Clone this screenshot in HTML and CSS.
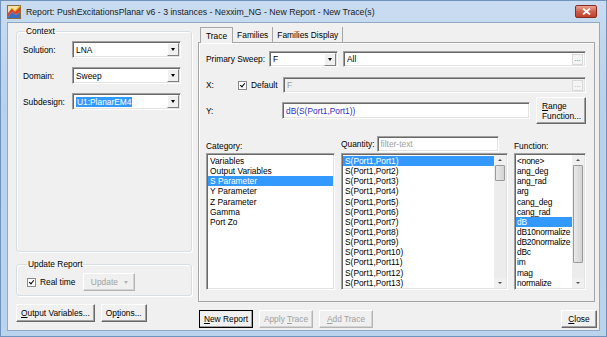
FILE: index.html
```html
<!DOCTYPE html>
<html lang="en">
<head>
    <meta charset="UTF-8">
    <title>Report - New Trace(s)</title>
    <link rel="stylesheet" href="styles.css">
</head>
<body>
    <div class="window">
        <!-- title bar -->
        <div class="titlebar">
            <svg class="app-icon" width="14" height="14" viewBox="0 0 14 14">
                <rect x="0.5" y="0.5" width="13" height="13" fill="#f4e2b0" stroke="#8a6d3b"/>
                <path d="M1 8 L5 3 L8 6 L13 1 L13 7 L9 10 L5 7 L1 12 Z" fill="#d8452b"/>
                <path d="M1 12 L5 7 L9 10 L13 7 L13 13 L1 13 Z" fill="#3b6fc4"/>
                <path d="M5 3 L8 6 L13 1" fill="none" stroke="#f2c230" stroke-width="1.2"/>
            </svg>
            <span class="title">Report: PushExcitationsPlanar v6 - 3 instances - Nexxim_NG - New Report - New Trace(s)</span>
            <div class="close-btn">
                <svg width="9" height="7" viewBox="0 0 9 7"><path d="M1 0.5 L8 6.5 M8 0.5 L1 6.5" stroke="#fff" stroke-width="1.8"/></svg>
            </div>
        </div>

        <div class="client">
            <!-- left column -->
            <div class="left-col">
                <fieldset class="group context-group">
                    <legend>Context</legend>
                    <div class="ctx-row">
                        <span class="ctx-label">Solution:</span>
                        <div class="combo ctx-combo"><span class="combo-text">LNA</span><span class="combo-arrow"></span></div>
                    </div>
                    <div class="ctx-row">
                        <span class="ctx-label">Domain:</span>
                        <div class="combo ctx-combo"><span class="combo-text">Sweep</span><span class="combo-arrow"></span></div>
                    </div>
                    <div class="ctx-row">
                        <span class="ctx-label">Subdesign:</span>
                        <div class="combo ctx-combo"><span class="combo-text"><span class="sel-text">U1:PlanarEM4</span></span><span class="combo-arrow"></span></div>
                    </div>
                </fieldset>

                <fieldset class="group update-group">
                    <legend>Update Report</legend>
                    <div class="update-row">
                        <span class="check checked"></span>
                        <span class="check-label">Real time</span>
                        <div class="btn disabled update-btn"><span>Update</span><span class="small-arrow"></span></div>
                    </div>
                </fieldset>

                <div class="btn-row">
                    <div class="btn"><span><u>O</u>utput Variables...</span></div>
                    <div class="btn"><span>Op<u>t</u>ions...</span></div>
                </div>
            </div>

            <!-- right column -->
            <div class="right-col">
                <div class="tabs">
                    <div class="tab active">Trace</div>
                    <div class="tab">Families</div>
                    <div class="tab">Families Display</div>
                </div>
                <div class="panel">
                    <div class="row sweep-row">
                        <span class="lbl sweep-lbl">Primary Sweep:</span>
                        <div class="combo sweep-combo"><span class="combo-text">F</span><span class="combo-arrow"></span></div>
                        <div class="field wide-field"><span class="field-text">All</span><span class="dots">...</span></div>
                    </div>
                    <div class="row x-row">
                        <span class="lbl x-lbl">X:</span>
                        <span class="check checked"></span>
                        <span class="check-label default-lbl">Default</span>
                        <div class="field wide-field disabled"><span class="field-text">F</span><span class="dots">...</span></div>
                    </div>
                    <div class="row y-row">
                        <span class="lbl y-lbl">Y:</span>
                        <div class="field y-field"><span class="field-text expr">dB(S(Port1,Port1))</span></div>
                        <div class="btn range-btn"><u>R</u>ange<br>Function...</div>
                    </div>

                    <div class="lists">
                        <div class="list-head">Category:</div>
                        <div class="list-head qty-head">Quantity: <div class="field filter"><span class="field-text hint">filter-text</span></div></div>
                        <div class="list-head">Function:</div>

                        <div class="listbox">
                            <div class="items">
                                <div class="item">Variables</div>
                                <div class="item">Output Variables</div>
                                <div class="item selected">S Parameter</div>
                                <div class="item">Y Parameter</div>
                                <div class="item">Z Parameter</div>
                                <div class="item">Gamma</div>
                                <div class="item">Port Zo</div>
                            </div>
                        </div>

                        <div class="listbox">
                            <div class="items">
                                <div class="item selected">S(Port1,Port1)</div>
                                <div class="item">S(Port1,Port2)</div>
                                <div class="item">S(Port1,Port3)</div>
                                <div class="item">S(Port1,Port4)</div>
                                <div class="item">S(Port1,Port5)</div>
                                <div class="item">S(Port1,Port6)</div>
                                <div class="item">S(Port1,Port7)</div>
                                <div class="item">S(Port1,Port8)</div>
                                <div class="item">S(Port1,Port9)</div>
                                <div class="item">S(Port1,Port10)</div>
                                <div class="item">S(Port1,Port11)</div>
                                <div class="item">S(Port1,Port12)</div>
                                <div class="item">S(Port1,Port13)</div>
                            </div>
                            <div class="scrollbar">
                                <span class="sb-btn up"></span>
                                <div class="sb-track"><span class="sb-thumb qty-thumb"></span></div>
                                <span class="sb-btn down"></span>
                            </div>
                        </div>

                        <div class="listbox fn-list">
                            <div class="items">
                                <div class="item">&lt;none&gt;</div>
                                <div class="item">ang_deg</div>
                                <div class="item">ang_rad</div>
                                <div class="item">arg</div>
                                <div class="item">cang_deg</div>
                                <div class="item">cang_rad</div>
                                <div class="item selected">dB</div>
                                <div class="item">dB10normalize</div>
                                <div class="item">dB20normalize</div>
                                <div class="item">dBc</div>
                                <div class="item">im</div>
                                <div class="item">mag</div>
                                <div class="item">normalize</div>
                            </div>
                            <div class="scrollbar">
                                <span class="sb-btn up"></span>
                                <div class="sb-track"><span class="sb-thumb fn-thumb"></span></div>
                                <span class="sb-btn down"></span>
                            </div>
                        </div>
                    </div>
                </div>

                <div class="btn-row">
                    <div class="btn default-btn"><span><u>N</u>ew Report</span></div>
                    <div class="btn disabled"><span>Apply <u>T</u>race</span></div>
                    <div class="btn disabled"><span><u>A</u>dd Trace</span></div>
                    <div class="btn close-dlg"><span><u>C</u>lose</span></div>
                </div>
            </div>
        </div>
    </div>
</body>
</html>
```

FILE: styles.css
```css
body {
    margin: 0;
    font-family: "Liberation Sans", Arial, sans-serif;
    font-size: 8.4px;
    color: #000;
    background: #fff;
}

/* window frame */
.window {
    width: 607px;
    height: 337px;
    box-sizing: border-box;
    display: flex;
    flex-direction: column;
    padding: 0 6px 5px 6px;
    border: 1px solid #6f93bd;
    background: linear-gradient(#c9dcf1, #b9d1eb 30%, #bcd3ec);
}

.titlebar {
    height: 21px;
    display: flex;
    align-items: center;
    flex-shrink: 0;
}

.app-icon {
    margin: 0 5px 0 0;
}

.title {
    flex: 1;
    font-size: 8.7px;
    color: #1a1a1a;
    white-space: nowrap;
}

.close-btn {
    width: 20px;
    height: 11px;
    margin-right: 3px;
    border: 1px solid #8b2a20;
    border-radius: 2px;
    background: linear-gradient(#e8a394, #d0604c 50%, #c0402c);
    display: flex;
    justify-content: center;
    align-items: center;
}

/* dialog body */
.client {
    flex: 1;
    display: flex;
    gap: 6px;
    background: #f0f0f0;
    border: 1px solid #8fa9c7;
    padding: 3px 5px 8px 8px;
    min-height: 0;
}

.left-col {
    width: 176px;
    display: flex;
    flex-direction: column;
}

.right-col {
    flex: 1;
    display: flex;
    flex-direction: column;
}

/* group boxes */
.group {
    margin: 0;
    border: 1px solid #d5dfe5;
    border-radius: 3px;
    box-shadow: inset 1px 1px #fff, 1px 1px #fff;
    padding: 0 6px;
}

.group legend {
    padding: 0 1px;
    margin-left: 2px;
    line-height: 10px;
}

.context-group {
    flex: 1;
    padding-top: 5px;
}

.update-group {
    margin-top: 7px;
    padding: 4px 8px 4px 8px;
}

.ctx-row {
    display: flex;
    align-items: center;
    height: 17px;
    margin-bottom: 9px;
}

.ctx-label {
    width: 49px;
}

.ctx-combo {
    width: 109px;
}

/* combo boxes and text fields */
.combo,
.field {
    height: 17px;
    box-sizing: border-box;
    background: #fff;
    border: 1px solid;
    border-color: #a0a0a0 #fff #fff #a0a0a0;
    box-shadow: inset 1px 1px #696969, inset -1px -1px #e3e3e3;
    display: flex;
    align-items: center;
}

.combo-text,
.field-text {
    flex: 1;
    padding-left: 3px;
    white-space: nowrap;
    overflow: hidden;
}

.sel-text {
    background: #3399ff;
    color: #fff;
    padding: 1px 1px;
}

.combo-arrow {
    width: 12px;
    height: 13px;
    margin-right: 1px;
    box-sizing: border-box;
    background: #f0f0f0;
    border: 1px solid;
    border-color: #fff #808080 #808080 #fff;
    position: relative;
}

.combo-arrow::after {
    content: "";
    position: absolute;
    left: 3px;
    top: 4px;
    border-left: 2.5px solid transparent;
    border-right: 2.5px solid transparent;
    border-top: 3px solid #000;
}

.dots {
    width: 11px;
    height: 11px;
    margin-right: 2px;
    box-sizing: border-box;
    border: 1px solid #d9d9d9;
    background: #f4f4f4;
    color: #2b56c9;
    font-size: 7px;
    line-height: 8px;
    text-align: center;
}

.field.disabled {
    background: #f0f0f0;
    color: #9a9a9a;
}

.field.disabled .dots {
    color: #a0a0a0;
}

/* checkbox */
.check {
    width: 9px;
    height: 9px;
    box-sizing: border-box;
    background: #fff;
    border: 1px solid #8a8a8a;
    position: relative;
    flex-shrink: 0;
}

.check.checked::after {
    content: "";
    position: absolute;
    left: 2px;
    top: 0px;
    width: 2px;
    height: 4px;
    border: solid #000;
    border-width: 0 1.5px 1.5px 0;
    transform: rotate(40deg);
}

.check-label {
    margin-left: 4px;
}

.update-row {
    display: flex;
    align-items: center;
    height: 18px;
    padding-left: 2px;
}

.update-btn {
    margin-left: 8px;
    width: 52px;
}

.small-arrow {
    display: inline-block;
    margin-left: 6px;
    border-left: 2.5px solid transparent;
    border-right: 2.5px solid transparent;
    border-top: 3px solid #b0b0b0;
}

/* buttons */
.btn {
    height: 18px;
    box-sizing: border-box;
    padding: 0 4px;
    display: flex;
    align-items: center;
    justify-content: center;
    background: #f0f0f0;
    border: 1px solid;
    border-color: #fff #696969 #696969 #fff;
    box-shadow: inset -1px -1px #a0a0a0;
    white-space: nowrap;
}

.btn.disabled {
    color: #a0a0a0;
    border-color: #fff #b4b4b4 #b4b4b4 #fff;
    box-shadow: inset -1px -1px #d4d4d4;
}

.btn-row {
    display: flex;
    gap: 6px;
    margin-top: 8px;
    flex-shrink: 0;
}

.default-btn {
    outline: 1px solid #000;
    outline-offset: -1px;
    width: 54px;
    margin-left: 1px;
}

.btn-row .btn.disabled {
    width: 54px;
}

.close-dlg {
    margin-left: auto;
    width: 36px;
    margin-right: -3px;
}

/* tabs */
.tabs {
    display: flex;
    height: 16px;
    padding-left: 2px;
    flex-shrink: 0;
}

.tab {
    padding: 0 4px;
    display: flex;
    align-items: center;
    border-right: 1px solid #a6a6a6;
    margin-top: 1px;
}

.tab.active {
    margin-top: 0;
    padding: 0 5px;
    border: 1px solid #a6a6a6;
    border-bottom: none;
    background: #f0f0f0;
    position: relative;
    top: 1px;
}

.panel {
    flex: 1;
    border: 1px solid #a6a6a6;
    box-shadow: inset 1px 1px #fff;
    padding: 8px 8px 11px 7px;
    display: flex;
    flex-direction: column;
    margin-right: -1px;
}

.row {
    display: flex;
    align-items: center;
}

.sweep-row {
    height: 16px;
}

.sweep-lbl {
    width: 63px;
}

.sweep-combo {
    width: 69px;
    height: 16px;
}

.sweep-row .wide-field {
    margin-left: 5px;
}

.wide-field {
    flex: 1;
    height: 16px;
}

.x-row {
    height: 16px;
    margin-top: 10px;
}

.x-lbl {
    width: 32px;
}

.default-lbl {
    width: 32px;
}

.y-row {
    height: 27px;
    margin-top: 4px;
}

.y-lbl {
    width: 76px;
}

.y-field {
    flex: 1;
    height: 17px;
}

.expr {
    color: #3030c0;
}

.range-btn {
    width: 50px;
    height: 27px;
    margin-left: 6px;
    padding-left: 5px;
    line-height: 10px;
    display: block;
    padding-top: 3px;
}

/* lists */
.lists {
    flex: 1;
    margin-top: 12px;
    display: grid;
    grid-template-columns: 129px 167px 72px;
    grid-template-rows: 16px 1fr;
    justify-content: space-between;
    row-gap: 1px;
    min-height: 0;
}

.list-head {
    display: flex;
    align-items: flex-end;
    padding-bottom: 1px;
}

.qty-head {
    align-items: center;
}

.filter {
    margin-left: 2px;
    width: 122px;
    height: 16px;
}

.hint {
    color: #a0a0a0;
}

.listbox {
    background: #fff;
    border: 1px solid;
    border-color: #a0a0a0 #fff #fff #a0a0a0;
    box-shadow: inset 1px 1px #696969, inset -1px -1px #e3e3e3;
    display: flex;
    padding: 1px;
    min-height: 0;
    overflow: hidden;
}

.items {
    flex: 1;
    padding-top: 1px;
    overflow: hidden;
}

.item {
    height: 10.15px;
    line-height: 10px;
    padding-left: 2px;
    white-space: nowrap;
}

.fn-list .item {
    padding-left: 1px;
    letter-spacing: -0.2px;
}

.item.selected {
    background: #3399ff;
    color: #fff;
}

.scrollbar {
    width: 12px;
    display: flex;
    flex-direction: column;
    background: #f0f0f0;
}

.sb-btn {
    height: 10px;
    position: relative;
    flex-shrink: 0;
}

.sb-btn::after {
    content: "";
    position: absolute;
    left: 4px;
    border-left: 2px solid transparent;
    border-right: 2px solid transparent;
}

.sb-btn.up::after {
    top: 4px;
    border-bottom: 2px solid #505050;
}

.sb-btn.down::after {
    top: 4px;
    border-top: 2px solid #505050;
}

.sb-track {
    flex: 1;
    position: relative;
    background: #ececec;
}

.sb-thumb {
    position: absolute;
    left: 1px;
    right: 1px;
    top: 0;
    box-sizing: border-box;
    border: 1px solid #9a9a9a;
    border-radius: 1px;
    background: linear-gradient(90deg, #e8e8e8, #d4d4d4);
}

.qty-thumb {
    height: 16px;
}

.fn-thumb {
    height: 98px;
}
```
